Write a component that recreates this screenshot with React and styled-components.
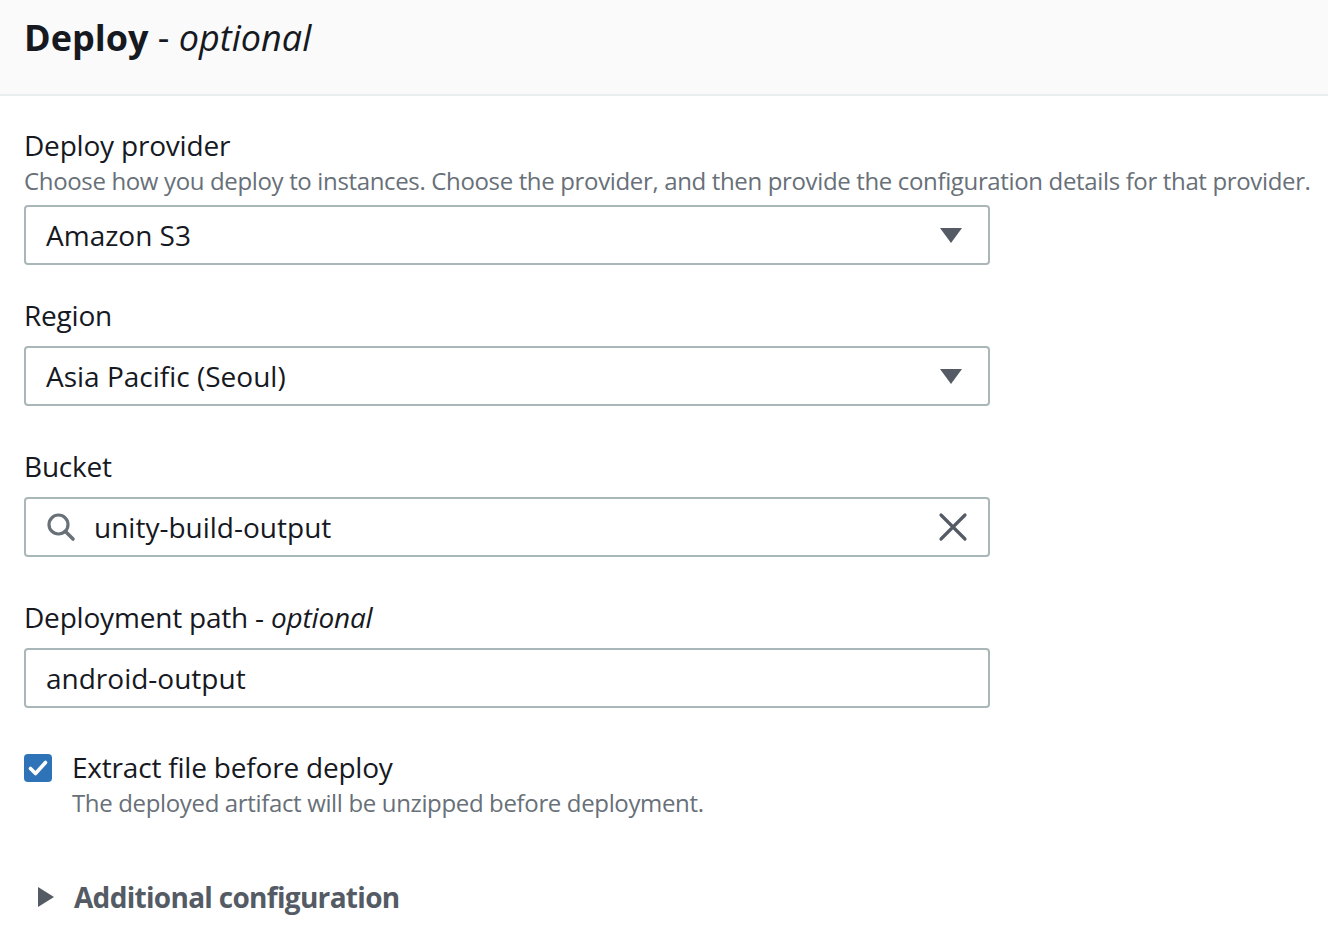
import React, { useState } from "react";
import styled, { createGlobalStyle } from "styled-components";

const GlobalStyle = createGlobalStyle`
  html, body {
    margin: 0;
    padding: 0;
    background: #ffffff;
  }
  body {
    font-family: "Open Sans", "Noto Sans", sans-serif;
    color: #16191f;
  }
`;

export default function App() {
  const [bucket, setBucket] = useState("unity-build-output");
  const [extract, setExtract] = useState(true);

  return (
    <Page>
      <GlobalStyle />
      <Header>
        <Title>
          Deploy <Dash>-</Dash> <em>optional</em>
        </Title>
      </Header>
      <Form>
        <Field $gap={27}>
          <Label>Deploy provider</Label>
          <Description $tight>
            Choose how you deploy to instances. Choose the provider, and then
            provide the configuration details for that provider.
          </Description>
          <Control>
            <Value>Amazon S3</Value>
            <Caret />
          </Control>
        </Field>

        <Field $gap={28}>
          <Label>Region</Label>
          <Control>
            <Value>Asia Pacific (Seoul)</Value>
            <Caret />
          </Control>
        </Field>

        <Field $gap={38}>
          <Label>Bucket</Label>
          <Control>
            <SearchIcon />
            <Value $withIcon>{bucket}</Value>
            <ClearButton onClick={() => setBucket("")}>
              <svg width="30" height="30" viewBox="0 0 30 30">
                <path
                  d="M3 3 L27 27 M27 3 L3 27"
                  stroke="#545b64"
                  strokeWidth="3.2"
                  strokeLinecap="round"
                  fill="none"
                />
              </svg>
            </ClearButton>
          </Control>
        </Field>

        <Field $gap={38}>
          <Label>
            Deployment path - <em>optional</em>
          </Label>
          <Control>
            <Value>android-output</Value>
          </Control>
        </Field>

        <CheckRow>
          <Checkbox $checked={extract} onClick={() => setExtract(!extract)}>
            {extract && (
              <svg width="28" height="28" viewBox="0 0 28 28">
                <path
                  d="M6.5 14.5 L11.5 19.5 L21.5 8.5"
                  stroke="#ffffff"
                  strokeWidth="3.6"
                  strokeLinecap="round"
                  strokeLinejoin="round"
                  fill="none"
                />
              </svg>
            )}
          </Checkbox>
          <CheckText>
            <CheckLabel>Extract file before deploy</CheckLabel>
            <Description $tight>
              The deployed artifact will be unzipped before deployment.
            </Description>
          </CheckText>
        </CheckRow>

        <Expander>
          <ExpandCaret />
          <ExpandTitle>Additional configuration</ExpandTitle>
        </Expander>
      </Form>
    </Page>
  );
}

function SearchIcon() {
  return (
    <IconBox>
      <svg width="30" height="30" viewBox="0 0 30 30">
        <circle cx="12.5" cy="12.5" r="9.5" stroke="#687078" strokeWidth="3.2" fill="none" />
        <path d="M19.5 19.5 L27 27" stroke="#687078" strokeWidth="3.6" strokeLinecap="round" />
      </svg>
    </IconBox>
  );
}

const Page = styled.div`
  width: 1328px;
  min-height: 934px;
  background: #ffffff;
`;

const Header = styled.div`
  height: 96px;
  background: #fafafa;
  border-bottom: 2px solid #eaeded;
  padding: 0 24px;
  display: flex;
  align-items: center;
  box-sizing: border-box;
`;

const Title = styled.h2`
  margin: 0;
  margin-top: -18px;
  font-size: 36px;
  line-height: 44px;
  font-weight: 700;
  color: #16191f;

  em {
    font-weight: 400;
    font-style: italic;
  }
`;

const Dash = styled.span`
  font-weight: 400;
`;

const Form = styled.div`
  padding: 0 24px;
  display: flex;
  flex-direction: column;
`;

const Field = styled.div`
  width: 966px;
  display: flex;
  flex-direction: column;
  margin-top: ${(p) => p.$gap}px;
`;

const Label = styled.label`
  font-size: 28px;
  line-height: 44px;
  letter-spacing: -0.2px;
  color: #16191f;
  white-space: nowrap;

  em {
    font-style: italic;
  }
`;

const Description = styled.div`
  margin-top: ${(p) => (p.$tight ? "-2px" : "0")};
  font-size: 24px;
  line-height: 32px;
  letter-spacing: -0.35px;
  color: #687078;
  white-space: nowrap;
`;

const Control = styled.div`
  margin-top: 8px;
  height: 60px;
  box-sizing: border-box;
  border: 2px solid #aab7b8;
  border-radius: 4px;
  display: flex;
  align-items: center;
  padding: 0 20px 0 20px;
  background: #ffffff;
  ${Label} + & {
    margin-top: 9px;
  }
`;

const Value = styled.div`
  flex: 1;
  font-size: 28px;
  color: #16191f;
  margin-left: ${(p) => (p.$withIcon ? "18px" : "0")};
`;

const Caret = styled.span`
  width: 0;
  height: 0;
  margin-right: 6px;
  border-left: 11px solid transparent;
  border-right: 11px solid transparent;
  border-top: 15px solid #545b64;
`;

const IconBox = styled.span`
  display: flex;
  width: 30px;
  height: 30px;
`;

const ClearButton = styled.button`
  border: none;
  background: none;
  padding: 0;
  display: flex;
  cursor: pointer;
`;

const CheckRow = styled.div`
  margin-top: 37px;
  display: flex;
  align-items: flex-start;
  gap: 20px;
`;

const Checkbox = styled.div`
  width: 28px;
  height: 28px;
  margin-top: 9px;
  border-radius: 4px;
  box-sizing: border-box;
  background: ${(p) => (p.$checked ? "#2e73b8" : "#ffffff")};
  border: ${(p) => (p.$checked ? "none" : "2px solid #aab7b8")};
  cursor: pointer;
  display: flex;
`;

const CheckText = styled.div`
  display: flex;
  flex-direction: column;
`;

const CheckLabel = styled.div`
  font-size: 28px;
  line-height: 44px;
  letter-spacing: -0.2px;
  color: #16191f;
`;

const Expander = styled.div`
  margin-top: 56px;
  display: flex;
  align-items: center;
  gap: 20px;
  padding-left: 14px;
  cursor: pointer;
`;

const ExpandCaret = styled.span`
  width: 0;
  height: 0;
  border-top: 10px solid transparent;
  border-bottom: 10px solid transparent;
  border-left: 16px solid #545b64;
`;

const ExpandTitle = styled.div`
  font-size: 28px;
  line-height: 44px;
  font-weight: 700;
  letter-spacing: -0.7px;
  color: #545b64;
`;
